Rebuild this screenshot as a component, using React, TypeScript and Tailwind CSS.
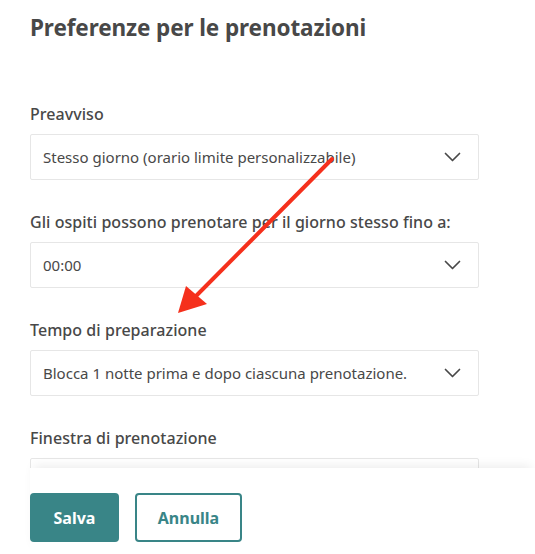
import React from "react";

const fields = [
  { label: "Preavviso", value: "Stesso giorno (orario limite personalizzabile)" },
  { label: "Gli ospiti possono prenotare per il giorno stesso fino a:", value: "00:00" },
  { label: "Tempo di preparazione", value: "Blocca 1 notte prima e dopo ciascuna prenotazione." },
  { label: "Finestra di prenotazione", value: "" },
];

const Chevron: React.FC = () => (
  <svg width="17" height="10" viewBox="0 0 17 10" fill="none" className="shrink-0">
    <path d="M1.5 1.5 L8.5 8.5 L15.5 1.5" stroke="#484848" strokeWidth="1.7" strokeLinecap="round" strokeLinejoin="round" />
  </svg>
);

const App: React.FC = () => {
  return (
    <div
      className="relative flex h-[554px] w-[535px] flex-col overflow-hidden bg-white text-[#484848]"
      style={{ fontFamily: "'Noto Sans', 'Open Sans', sans-serif" }}
    >
      {/* scrolling content */}
      <div className="flex-1 overflow-hidden px-[30px] pt-[12px]">
        <h1 className="text-[22.5px] font-bold leading-[32px] tracking-[-0.1px]">
          Preferenze per le prenotazioni
        </h1>
        <div className="mt-[60px] flex w-[449px] flex-col gap-[32px]">
          {fields.map((f) => (
            <div key={f.label} className="flex flex-col gap-[10px]">
              <label className="text-[16px] font-medium leading-[20px] tracking-[0.05px]">{f.label}</label>
              <div className="flex h-[46px] items-center justify-between rounded-[2px] border border-[#e6e6e6] pl-[12px] pr-[17px]">
                <span className="text-[15px] text-[#484848]">{f.value}</span>
                <Chevron />
              </div>
            </div>
          ))}
        </div>
      </div>

      {/* footer */}
      <div className="ml-[30px] flex h-[86px] shrink-0 items-start gap-[16px] bg-white pt-[25px] shadow-[0_-6px_10px_-4px_rgba(0,0,0,0.08)]">
        <button className="h-[49px] w-[89px] rounded-[4px] bg-[#398587] text-[16px] font-bold text-white">
          Salva
        </button>
        <button className="h-[49px] w-[107px] rounded-[4px] border-2 border-[#398587] bg-white text-[16px] font-bold text-[#398587]">
          Annulla
        </button>
      </div>

      {/* annotation arrow */}
      <svg className="pointer-events-none absolute left-0 top-0" width="535" height="554" viewBox="0 0 535 554">
        <line x1="332" y1="159" x2="196" y2="296" stroke="#f5301c" strokeWidth="4" strokeLinecap="round" />
        <polygon points="178,313 186,286 207,304" fill="#f5301c" />
      </svg>
    </div>
  );
};

export default App;
